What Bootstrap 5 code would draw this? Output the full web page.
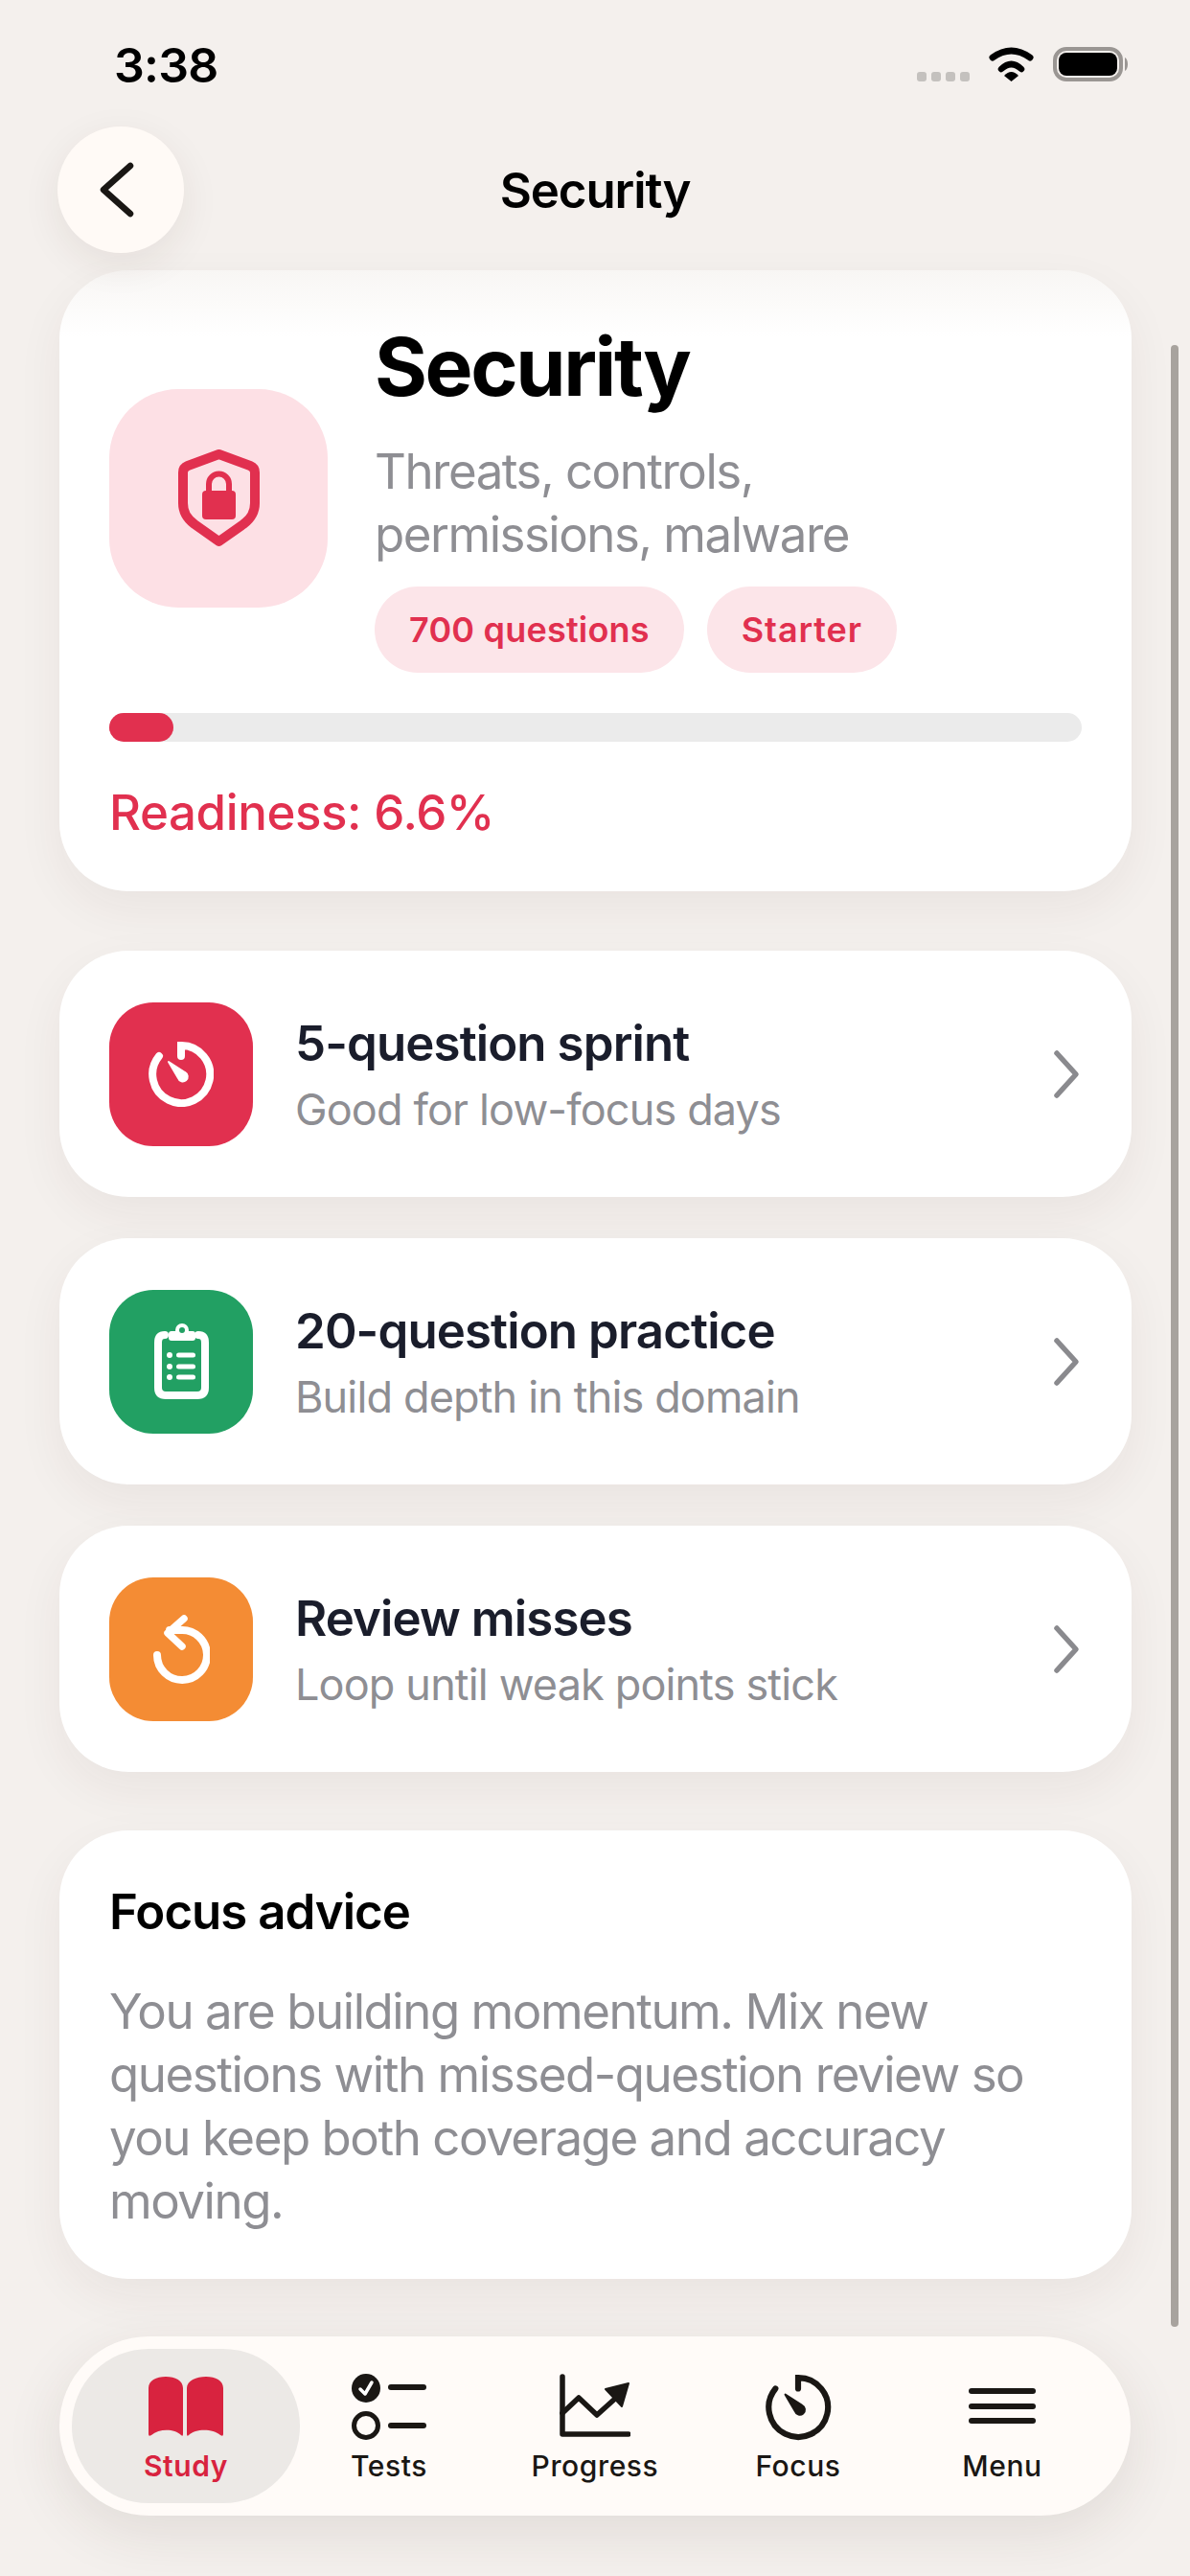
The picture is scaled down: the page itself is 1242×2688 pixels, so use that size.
<!DOCTYPE html>
<html lang="en">
<head>
<meta charset="UTF-8">
<title>Security</title>
<link href="https://cdn.jsdelivr.net/npm/bootstrap@5.3.2/dist/css/bootstrap.min.css" rel="stylesheet">
<script defer src="https://cdn.jsdelivr.net/npm/bootstrap@5.3.2/dist/js/bootstrap.bundle.min.js"></script>
<style>
body { width: 1242px; height: 2688px; overflow: hidden; background: #f4f0ed; font-family: Inter, "Liberation Sans", sans-serif; position: relative; color: #000; }
.status-row { height: 132px; padding: 0 64px 0 119px; }
.status-time { font-size: 50px; font-weight: 600; letter-spacing: -.75px; margin-top: 4px; }
.top-row { height: 132px; padding: 0 60px; }
.back-btn { width: 132px; height: 132px; background: #fffaf6; box-shadow: 0 12px 40px rgba(60,40,30,.08); border: 0; }
.back-art { margin-right: 8px; }
.top-title { font-size: 51px; font-weight: 600; letter-spacing: -1.1px; margin-top: 2px; }
.top-spacer { width: 132px; }
.page-body { padding: 18px 61px 0 62px; }
.sheet { background: #fff; border-radius: 72px; box-shadow: 0 18px 50px rgba(60,40,30,.06); }
.hero-sheet { height: 648px; padding: 0 52px; background: linear-gradient(#f8f6f4, #fff 70px); }
.hero-top { height: 462px; gap: 49px; }
.hero-icon { width: 228px; height: 228px; border-radius: 72px; background: #fde0e5; flex: none; margin-top: 13px; }
.hero-text { padding-top: 9px; }
.hero-name { font-size: 84px; font-weight: 700; line-height: 100px; letter-spacing: -2.4px; margin-bottom: 26px; }
.hero-sub { font-size: 51px; line-height: 66px; color: #8e8e93; letter-spacing: -1.5px; }
.chip-line { gap: 24px; margin-top: 21px; }
.tag-chip { height: 90px; padding: 0 36px; border-radius: 45px; background: #fce5e9; color: #e1304f; font-size: 36px; font-weight: 600; letter-spacing: .2px; }
.chip-wide { letter-spacing: .9px; }
.track { height: 30px; background: #ebebeb; border-radius: 15px; }
.track-fill { height: 30px; background: #e1304f; border-radius: 15px; }
.ready-text { font-size: 51px; font-weight: 500; color: #e1304f; margin-top: 44px; line-height: 60px; letter-spacing: -.4px; }
.action-row { height: 257px; padding: 0 52px; margin-top: 43px; gap: 44px; }
.first-action { margin-top: 62px; }
.action-text { padding-top: 2px; }
.action-icon { width: 150px; height: 150px; border-radius: 46px; flex: none; }
.bg-red { background: #e1304f; }
.bg-grn { background: #22a063; }
.bg-org { background: #f48c34; }
.action-name { font-size: 51px; font-weight: 600; color: #1a1d2b; line-height: 64px; letter-spacing: -.9px; }
.action-sub { font-size: 45px; color: #8e8e93; line-height: 58px; letter-spacing: -.85px; margin-top: 8px; }
.advice-sheet { height: 468px; margin-top: 61px; padding: 53px 52px 0; }
.advice-title { font-size: 51px; font-weight: 600; line-height: 64px; margin-bottom: 39px; letter-spacing: -1px; }
.advice-text { font-size: 51px; line-height: 66px; color: #8e8e93; letter-spacing: -1.45px; }
.tab-bar { position: absolute; left: 62px; top: 2438px; width: 1118px; height: 187px; padding: 13px 11px 13px 13px; border-radius: 94px; background: #fffbf8; box-shadow: 0 18px 60px rgba(60,40,30,.1); }
.tab-item { height: 161px; font-size: 30px; font-weight: 500; color: #1a1714; letter-spacing: .6px; padding-top: 9px; }
.tab-on { width: 238px; border-radius: 80px; background: #ece9e6; color: #d8233f; font-weight: 600; }
.tab-w2 { width: 186px; }
.tab-w3 { width: 244px; }
.tab-w4 { width: 180px; }
.tab-w5 { width: 246px; }
.tab-art { height: 72px; margin-bottom: 3px; }
.scroll-thumb { position: absolute; left: 1222px; top: 360px; width: 8px; height: 2068px; border-radius: 4px; background: #a8a39e; }
</style>
</head>
<body>

<div class="status-row d-flex align-items-center justify-content-between">
    <span class="status-time">3:38</span>
    <svg width="221" height="46" viewBox="0 0 221 46">
        <g fill="#c4c1be"><rect x="0" y="32" width="10" height="10" rx="3"/><rect x="15" y="32" width="10" height="10" rx="3"/><rect x="30" y="32" width="10" height="10" rx="3"/><rect x="45" y="32" width="10" height="10" rx="3"/></g>
        <path d="M79 17 Q98.5 3 118 17" fill="none" stroke="#000" stroke-width="7" stroke-linecap="round"/>
        <path d="M88 29 Q98.5 19 109 29" fill="none" stroke="#000" stroke-width="6.5" stroke-linecap="round"/>
        <path d="M91 36 Q98.5 28 106 36 L98.5 42 Z" fill="#000"/>
        <rect x="144" y="8" width="69" height="32" rx="12" fill="none" stroke="#9a9693" stroke-width="4"/>
        <rect x="148" y="12" width="61" height="24" rx="8" fill="#000"/>
        <path d="M217 17 C221 19 221 29 217 31Z" fill="#9a9693"/>
    </svg>
</div>

<div class="top-row d-flex align-items-center">
    <button class="back-btn rounded-circle d-flex align-items-center justify-content-center flex-none">
        <svg class="back-art" width="36" height="58" viewBox="0 0 36 58"><path d="M32 4 L4 29 L32 54" fill="none" stroke="#1a1714" stroke-width="6.5" stroke-linecap="round" stroke-linejoin="round"/></svg>
    </button>
    <div class="top-title flex-grow-1 text-center">Security</div>
    <div class="top-spacer"></div>
</div>

<div class="page-body">
    <div class="sheet hero-sheet">
        <div class="hero-top d-flex align-items-center">
            <div class="hero-icon d-flex align-items-center justify-content-center">
                <svg width="85" height="102" viewBox="0 0 85 102">
                    <path d="M42.5 5 L75 17 Q80 19 80 24 V56 C80 66 76 72 68 78 L42.5 96 L17 78 C9 72 5 66 5 56 V24 Q5 19 10 17 Z" fill="none" stroke="#e1304f" stroke-width="10" stroke-linejoin="round"/>
                    <rect x="25" y="43" width="35" height="30" rx="4" fill="#e1304f"/>
                    <path d="M32 46 V36 A10.5 10.5 0 0 1 53 36 V46" fill="none" stroke="#e1304f" stroke-width="6"/>
                </svg>
            </div>
            <div class="hero-text">
                <div class="hero-name">Security</div>
                <div class="hero-sub">Threats, controls,<br>permissions, malware</div>
                <div class="chip-line d-flex">
                    <span class="tag-chip d-flex align-items-center">700 questions</span>
                    <span class="tag-chip chip-wide d-flex align-items-center">Starter</span>
                </div>
            </div>
        </div>
        <div class="track"><div class="track-fill" style="width: 6.6%"></div></div>
        <div class="ready-text">Readiness: 6.6%</div>
    </div>

    <div class="sheet action-row first-action d-flex align-items-center">
        <div class="action-icon bg-red d-flex align-items-center justify-content-center">
            <svg width="68" height="68" viewBox="0 0 68 68">
                <path d="M11 15 A30 30 0 1 0 34 4 V15" fill="none" stroke="#fff" stroke-width="8" stroke-linecap="round"/>
                <path d="M21 21 L38 32 A5 5 0 1 1 31 38 Z" fill="#fff" stroke="#fff" stroke-width="2" stroke-linejoin="round"/>
            </svg>
        </div>
        <div class="action-text flex-grow-1">
            <div class="action-name">5-question sprint</div>
            <div class="action-sub">Good for low-focus days</div>
        </div>
        <svg width="34" height="54" viewBox="0 0 34 54"><path d="M8 5 L28 27 L8 49" fill="none" stroke="#8a8a8e" stroke-width="5.5" stroke-linecap="round" stroke-linejoin="round"/></svg>
    </div>

    <div class="sheet action-row d-flex align-items-center">
        <div class="action-icon bg-grn d-flex align-items-center justify-content-center">
            <svg width="57" height="79" viewBox="0 0 57 79">
                <path d="M11 12 Q4 12 4 20 V67 Q4 75 12 75 H45 Q53 75 53 67 V20 Q53 12 46 12" fill="none" stroke="#fff" stroke-width="8" stroke-linecap="round"/>
                <circle cx="29" cy="7" r="7" fill="#fff"/>
                <rect x="15" y="8" width="28" height="10" rx="3" fill="#fff"/>
                <circle cx="29" cy="7" r="3" fill="#22a063"/>
                <g fill="#fff"><circle cx="16" cy="33" r="3"/><circle cx="16" cy="45" r="3"/><circle cx="16" cy="56" r="3"/><rect x="23" y="30.5" width="20" height="5" rx="2.5"/><rect x="23" y="42.5" width="20" height="5" rx="2.5"/><rect x="23" y="53.5" width="20" height="5" rx="2.5"/></g>
            </svg>
        </div>
        <div class="action-text flex-grow-1">
            <div class="action-name">20-question practice</div>
            <div class="action-sub">Build depth in this domain</div>
        </div>
        <svg width="34" height="54" viewBox="0 0 34 54"><path d="M8 5 L28 27 L8 49" fill="none" stroke="#8a8a8e" stroke-width="5.5" stroke-linecap="round" stroke-linejoin="round"/></svg>
    </div>

    <div class="sheet action-row d-flex align-items-center">
        <div class="action-icon bg-org d-flex align-items-center justify-content-center">
            <svg width="60" height="72" viewBox="0 0 60 72">
                <path d="M5 42 A26 26 0 1 0 30 16 H18" fill="none" stroke="#fff" stroke-width="8" stroke-linecap="round"/>
                <path d="M33 4 L16 19 L31 33" fill="none" stroke="#fff" stroke-width="7.5" stroke-linecap="round" stroke-linejoin="round"/>
            </svg>
        </div>
        <div class="action-text flex-grow-1">
            <div class="action-name">Review misses</div>
            <div class="action-sub">Loop until weak points stick</div>
        </div>
        <svg width="34" height="54" viewBox="0 0 34 54"><path d="M8 5 L28 27 L8 49" fill="none" stroke="#8a8a8e" stroke-width="5.5" stroke-linecap="round" stroke-linejoin="round"/></svg>
    </div>

    <div class="sheet advice-sheet">
        <div class="advice-title">Focus advice</div>
        <div class="advice-text">You are building momentum. Mix new questions with missed-question review so you keep both coverage and accuracy moving.</div>
    </div>
</div>

<nav class="tab-bar d-flex">
    <div class="tab-item tab-on d-flex flex-column align-items-center justify-content-center">
        <svg class="tab-art" width="80" height="72" viewBox="0 0 80 72">
            <path d="M1 16 C1 8 9 4 19 4 C29 4 37 8 37 16 V64 Q37 67 35 65 C28 58 12 58 4 65 Q1 67 1 64 Z" fill="#d8233f"/>
            <path d="M79 16 C79 8 71 4 61 4 C51 4 41 8 41 16 V64 Q41 67 43 65 C50 58 68 58 76 65 Q79 67 79 64 Z" fill="#d8233f"/>
        </svg>
        Study
    </div>
    <div class="tab-item tab-w2 d-flex flex-column align-items-center justify-content-center">
        <svg class="tab-art" width="80" height="72" viewBox="0 0 80 72">
            <circle cx="16" cy="16" r="15" fill="#1a1714"/>
            <path d="M10 17 L15 22 L22 10" fill="none" stroke="#fff" stroke-width="3.5" stroke-linecap="round" stroke-linejoin="round"/>
            <circle cx="16" cy="55" r="12.5" fill="none" stroke="#1a1714" stroke-width="5"/>
            <rect x="39" y="12" width="40" height="6" rx="3" fill="#1a1714"/>
            <rect x="39" y="52" width="40" height="6" rx="3" fill="#1a1714"/>
        </svg>
        Tests
    </div>
    <div class="tab-item tab-w3 d-flex flex-column align-items-center justify-content-center">
        <svg class="tab-art" width="74" height="72" viewBox="0 0 74 72">
            <path d="M3 4 V64 H72" fill="none" stroke="#1a1714" stroke-width="5.5" stroke-linecap="round" stroke-linejoin="round"/>
            <path d="M3 42 L20 26 L39 44 L59 26" fill="none" stroke="#1a1714" stroke-width="5.5" stroke-linecap="round" stroke-linejoin="round"/>
            <path d="M48 17 L72 11 L65 35 Z" fill="#1a1714" stroke="#1a1714" stroke-width="2" stroke-linejoin="round"/>
        </svg>
        Progress
    </div>
    <div class="tab-item tab-w4 d-flex flex-column align-items-center justify-content-center">
        <svg class="tab-art" width="70" height="72" viewBox="0 0 68 68">
            <path d="M11 15 A30 30 0 1 0 34 4 V15" fill="none" stroke="#1a1714" stroke-width="6" stroke-linecap="round"/>
            <path d="M21 21 L38 32 A5 5 0 1 1 31 38 Z" fill="#1a1714" stroke="#1a1714" stroke-width="2" stroke-linejoin="round"/>
        </svg>
        Focus
    </div>
    <div class="tab-item tab-w5 d-flex flex-column align-items-center justify-content-center">
        <svg class="tab-art" width="70" height="72" viewBox="0 0 70 72">
            <g fill="#1a1714"><rect x="0" y="16" width="70" height="6" rx="3"/><rect x="0" y="32" width="70" height="6" rx="3"/><rect x="0" y="47" width="70" height="6" rx="3"/></g>
        </svg>
        Menu
    </div>
</nav>

<div class="scroll-thumb"></div>

</body>
</html>
